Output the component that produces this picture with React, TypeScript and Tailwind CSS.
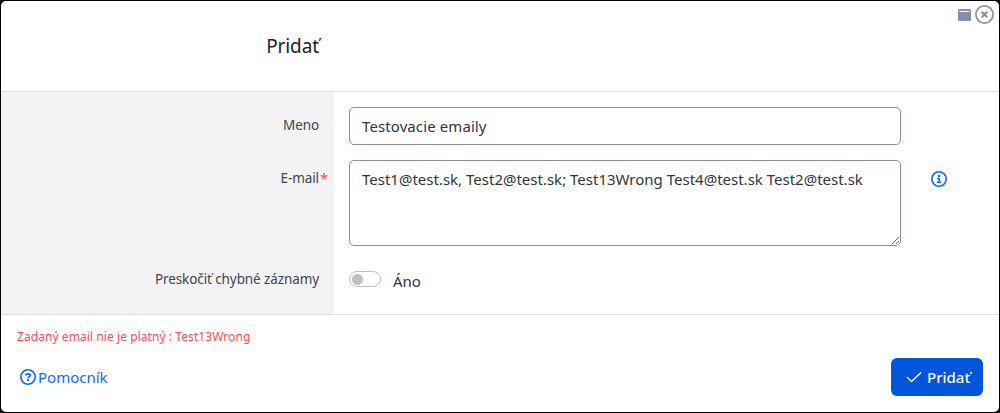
import React from "react";

function Label({ children }: { children: React.ReactNode }) {
  return (
    <span className="relative text-[13.5px] leading-[20px] tracking-[-0.1px] whitespace-nowrap text-[#43434f]">{children}</span>
  );
}

function InfoIcon() {
  return (
    <svg className="h-4 w-4 shrink-0" viewBox="0 0 16 16" fill="none" stroke="#0d6bf5" strokeWidth="1.6">
      <circle cx="8" cy="8" r="7.2" />
      <path d="M6 7.5h2.200v4M6 11.300h4.200" strokeWidth="1.500" />
      <rect x="7" y="4" width="2" height="2" fill="#0d6bf5" stroke="none" />
    </svg>
  );
}

function HelpIcon() {
  return (
    <svg className="h-4 w-4 shrink-0" viewBox="0 0 16 16" fill="none" stroke="#0d6bf5" strokeWidth="1.6">
      <circle cx="8" cy="8" r="7.2" />
      <path d="M5.700 6.300C5.800 5.200 6.700 4.800 8 4.800c1.400 0 2.300.500 2.300 1.600C10.300 7.700 8 7.600 8 9.200" strokeWidth="1.700" />
      <rect x="7" y="10" width="2" height="2" fill="#0d6bf5" stroke="none" />
    </svg>
  );
}

export default function App() {
  return (
    <div className="h-[413px] w-[1000px] bg-black p-px font-['Noto_Sans',sans-serif]">
      <div className="flex h-[411px] flex-col overflow-hidden rounded-[5px] bg-white">
        <header className="flex h-[91px] shrink-0 justify-between border-b border-[#dedfe4]">
          <h1 className="w-[318px] pt-[30px] text-right text-[19px] leading-[30px] tracking-[-0.1px] text-[#22222c]">Pridať</h1>
          <div className="flex gap-[4px] pt-[4px] pr-[5px]">
            <svg className="mt-[4px] h-3 w-[13px]" viewBox="0 0 13 12">
              <rect width="13" height="12" rx="1.5" fill="#868ea9" />
              <path d="M1.500 2.500h10" stroke="#fff" strokeWidth="1" />
            </svg>
            <svg className="h-[19px] w-[19px]" viewBox="0 0 19 19" fill="none" stroke="#868ea9">
              <circle cx="9.500" cy="9.500" r="8.600" strokeWidth="1.700" />
              <path d="M6.700 6.700l5.600 5.600M12.300 6.700l-5.600 5.600" strokeWidth="2" />
            </svg>
          </div>
        </header>

        <main className="flex h-[223px] shrink-0 border-b border-[#dedfe4]">
          <div className="flex w-[333px] flex-col items-end bg-[#f3f3f6] pr-[15px]">
            <div className="flex h-[53px] pt-[23px]"><Label>Meno</Label></div>
            <div className="flex h-[101px] pt-[23px]">
              <Label>
                E-mail
                <span className="absolute top-0 left-full pl-[1px] text-[15px] leading-[20px] text-[#ff4b58]">*</span>
              </Label>
            </div>
            <div className="flex pt-[23px]"><Label>Preskočiť chybné záznamy</Label></div>
          </div>
          <div className="flex flex-col pt-[15px] pl-[15px]">
            <input
              className="h-[38px] w-[552px] rounded-[5px] border border-[#868ea9] px-3 text-[15px] tracking-[0.1px] text-[#33333d] outline-none"
              defaultValue="Testovacie emaily"
            />
            <div className="mt-[15px] flex">
              <textarea
                className="block h-[86px] w-[552px] resize rounded-[5px] border border-[#868ea9] px-3 py-[6px] text-[15px] leading-[24px] text-[#33333d] outline-none"
                defaultValue="Test1@test.sk, Test2@test.sk; Test13Wrong Test4@test.sk Test2@test.sk"
              />
              <div className="pt-[11px] pl-[30px]"><InfoIcon /></div>
            </div>
            <label className="mt-[23px] flex">
              <span className="mt-[2px] flex h-4 w-8 items-center rounded-full border border-[#bfbfbf] pl-[2px]">
                <span className="h-[11px] w-[11px] rounded-full bg-[#bfbfbf]" />
              </span>
              <span className="pl-3 text-[15px] leading-[24px] text-[#33333d]">Áno</span>
            </label>
          </div>
        </main>

        <footer className="flex grow flex-col pr-4 pl-4">
          <p className="pt-[12px] text-[12px] leading-[20px] tracking-[0.07px] text-[#ff4b58]">Zadaný email nie je platný : Test13Wrong</p>
          <div className="mt-[11px] flex justify-between">
            <a className="flex items-center gap-[2px] pl-[3px] text-[15px] text-[#0d6bf5]">
              <HelpIcon />
              Pomocník
            </a>
            <button className="flex h-[38px] w-[92px] items-center rounded-[6px] bg-[#0055db] pl-[15px] text-[15px] font-medium text-white">
              <svg className="mr-[5px] h-4 w-4" viewBox="0 0 16 16" fill="none" stroke="currentColor" strokeWidth="1.3">
                <path d="M1 8l4.500 4.500L15 3.500" />
              </svg>
              Pridať
            </button>
          </div>
        </footer>
      </div>
    </div>
  );
}
